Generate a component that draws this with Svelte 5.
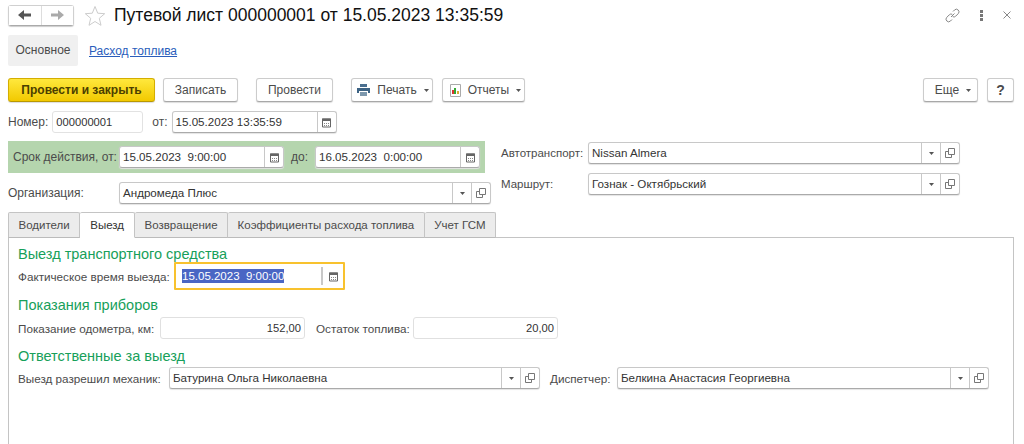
<script lang="ts">
  const tabs = ['Водители', 'Выезд', 'Возвращение', 'Коэффициенты расхода топлива', 'Учет ГСМ'];
</script>

{#snippet calendar()}
  <svg class="ico" width="11" height="11" viewBox="0 0 11 11">
    <path d="M1.500 2h8v8h-8z" fill="none" stroke="#666" />
    <path d="M1 1.500h9v2.500h-9z" fill="#666" />
    <path d="M3 6h1v1h-1zM5 6h1v1h-1zM7 6h1v1h-1zM3 8h1v1h-1zM5 8h1v1h-1zM7 8h1v1h-1z" fill="#888" />
  </svg>
{/snippet}

{#snippet caret()}
  <svg width="5" height="3" viewBox="0 0 5 3"><path d="M0 0h5l-2.500 3z" fill="#555" /></svg>
{/snippet}

{#snippet open()}
  <svg class="ico" width="10" height="10" viewBox="0 0 10 10">
    <path d="M3.500.5h6v6h-6z" fill="none" stroke="#777" />
    <path d="M3 3.500h-2.500v6h6v-2.500" fill="none" stroke="#777" />
  </svg>
{/snippet}

{#snippet dateField(cls: string, value: string)}
  <div class="field {cls}">
    <span class="value">{value}</span>
    <span class="btn">{@render calendar()}</span>
  </div>
{/snippet}

{#snippet refField(cls: string, value: string)}
  <div class="field {cls}">
    <span class="value">{value}</span>
    <span class="btn">{@render caret()}</span>
    <span class="btn">{@render open()}</span>
  </div>
{/snippet}

<div class="page">
  <header class="titlebar">
    <div class="nav">
      <button class="nav-btn">
        <svg width="14" height="10" viewBox="0 0 14 10"><path d="M6 0v3.500h7v3h-7v3.500l-6-5z" fill="#555" /></svg>
      </button>
      <button class="nav-btn">
        <svg width="14" height="10" viewBox="0 0 14 10"><path d="M8 0v3.500h-7v3h7v3.500l6-5z" fill="#aaa" /></svg>
      </button>
    </div>
    <svg class="star" width="22" height="21" viewBox="0 0 22 21">
      <path d="M11 1.500l2.700 6.700 7 .5-5.400 4.600 1.700 7-6-3.800-6 3.800 1.700-7-5.400-4.600 7-.5z" fill="none" stroke="#ccc" />
    </svg>
    <h1>Путевой лист 000000001 от 15.05.2023 13:35:59</h1>
    <div class="win-icons">
      <svg width="15" height="15" viewBox="0 0 15 15" fill="none" stroke="#888">
        <path d="M6 9l3.500-3.500M8 3.500l1.500-1.500a2.600 2.600 0 0 1 3.700 3.700l-2.500 2.500a2.600 2.600 0 0 1-3 .5" />
        <path d="M7 11.500l-1.500 1.500a2.600 2.600 0 0 1-3.700-3.700l2.500-2.500a2.600 2.600 0 0 1 3-.5" />
      </svg>
      <svg width="3" height="11" viewBox="0 0 3 11"><path d="M0 0h3v3h-3zM0 4h3v3h-3zM0 8h3v3h-3z" fill="#777" /></svg>
      <svg width="8" height="8" viewBox="0 0 8 8"><path d="M.5.500l7 7M7.500.500l-7 7" stroke="#888" fill="none" /></svg>
    </div>
  </header>

  <nav class="sections">
    <span class="section-active">Основное</span>
    <a href="#fuel" class="section-link">Расход топлива</a>
  </nav>

  <div class="toolbar">
    <button class="tbtn primary">Провести и закрыть</button>
    <button class="tbtn save">Записать</button>
    <button class="tbtn post">Провести</button>
    <button class="tbtn print">
      <svg width="13" height="12" viewBox="0 0 13 12">
        <path d="M3 0h7v3h-7z" fill="#4a6f8f" />
        <path d="M0 4h13v5h-2v-2h-9v2h-2z" fill="#3d6384" />
        <path d="M3 8h7v4h-7z" fill="#7d98ad" />
      </svg>
      Печать {@render caret()}
    </button>
    <button class="tbtn reports">
      <svg width="11" height="13" viewBox="0 0 11 13">
        <path d="M.5.500h10v12h-10z" fill="#fff" stroke="#aaa" />
        <path d="M2 6h2v4h-2z" fill="#d33" />
        <path d="M4 4h2v6h-2z" fill="#3a3" />
        <path d="M7 7h2v3h-2z" fill="#da3" />
      </svg>
      Отчеты {@render caret()}
    </button>
    <button class="tbtn more">Еще {@render caret()}</button>
    <button class="tbtn help">?</button>
  </div>

  <div class="number-row">
    <span class="lbl">Номер:</span>
    <div class="field number"><span class="value">000000001</span></div>
    <span class="lbl from">от:</span>
    {@render dateField('doc-date', '15.05.2023 13:35:59')}
  </div>

  <div class="columns">
    <div class="left-col">
      <div class="validity">
        <span class="lbl validity-lbl">Срок действия, от:</span>
        {@render dateField('valid-date', '15.05.2023  9:00:00')}
        <span class="lbl to">до:</span>
        {@render dateField('valid-date', '16.05.2023  0:00:00')}
      </div>
      <div class="org-row">
        <span class="lbl org-lbl">Организация:</span>
        {@render refField('org', 'Андромеда Плюс')}
      </div>
    </div>
    <div class="right-col">
      <div class="ref-row">
        <span class="lbl ref-lbl">Автотранспорт:</span>
        {@render refField('vehicle', 'Nissan Almera')}
      </div>
      <div class="ref-row">
        <span class="lbl ref-lbl">Маршрут:</span>
        {@render refField('vehicle', 'Гознак - Октябрьский')}
      </div>
    </div>
  </div>

  <div class="tabs">
    {#each tabs as tab, i}
      <span class="tab" class:active={i === 1}>{tab}</span>
    {/each}
  </div>

  <section class="panel">
    <h2>Выезд транспортного средства</h2>
    <div class="row first">
      <span class="lbl fact-lbl">Фактическое время выезда:</span>
      <div class="field focused">
        <span class="value"><span class="selected">15.05.2023  9:00:00</span></span>
        <span class="btn">{@render calendar()}</span>
      </div>
    </div>

    <h2 class="gauges">Показания приборов</h2>
    <div class="row">
      <span class="lbl odo-lbl">Показание одометра, км:</span>
      <div class="field num"><span class="value">152,00</span></div>
      <span class="lbl fuel-lbl">Остаток топлива:</span>
      <div class="field num"><span class="value">20,00</span></div>
    </div>

    <h2 class="resp">Ответственные за выезд</h2>
    <div class="row last">
      <span class="lbl mech-lbl">Выезд разрешил механик:</span>
      {@render refField('mech', 'Батурина Ольга Николаевна')}
      <span class="lbl disp-lbl">Диспетчер:</span>
      {@render refField('disp', 'Белкина Анастасия Георгиевна')}
    </div>
  </section>
</div>

<style>
  :global(body) {
    margin: 0;
    background: #fff;
    overflow: hidden;
  }
  .page {
    width: 1024px;
    height: 444px;
    overflow: hidden;
    box-sizing: border-box;
    padding: 4px 10px 0 8px;
    font-family: 'Liberation Sans', Arial, sans-serif;
    font-size: 12px;
    color: #4b4b4b;
  }

  .titlebar {
    display: flex;
    align-items: center;
    height: 22px;
  }
  .nav {
    display: flex;
    width: 66px;
    height: 21px;
    box-sizing: border-box;
    border: 1px solid #d0d0d0;
    border-bottom-color: #aaa;
    border-radius: 3px;
    box-shadow: 0 1px 1px #ccc;
  }
  .nav-btn {
    flex: 1;
    display: flex;
    align-items: center;
    justify-content: center;
    padding: 0;
    border: 0;
    background: #fff;
  }
  .nav-btn + .nav-btn {
    border-left: 1px solid #ddd;
  }
  .star {
    margin-left: 10px;
  }
  h1 {
    margin: 0 0 0 8px;
    font-size: 17.5px;
    font-weight: 400;
    color: #111;
  }
  .win-icons {
    margin-left: auto;
    margin-right: 3px;
    display: flex;
    align-items: center;
    gap: 20px;
  }

  .sections {
    display: flex;
    align-items: center;
    height: 31px;
    margin-top: 9px;
  }
  .section-active {
    width: 70px;
    height: 31px;
    line-height: 31px;
    text-align: center;
    background: #f0f0f0;
    border-radius: 2px;
  }
  .section-link {
    margin-left: 11px;
    color: #2a5dbb;
    text-decoration: underline;
  }

  .toolbar {
    display: flex;
    margin-top: 12px;
  }
  .tbtn {
    display: flex;
    align-items: center;
    justify-content: center;
    gap: 7px;
    height: 24px;
    padding: 0;
    box-sizing: border-box;
    border: 1px solid #ccc;
    border-bottom-color: #a8a8a8;
    border-radius: 3px;
    background: #fff;
    box-shadow: 0 1px 1px #ddd;
    font: inherit;
    color: #4b4b4b;
  }
  .primary {
    width: 147px;
    background: linear-gradient(#ffe83d, #f2c900);
    border-color: #d4ae00;
    border-bottom-color: #b99800;
    font-weight: 700;
    color: #4b3f00;
  }
  .save { width: 75px; margin-left: 8px; }
  .post { width: 77px; margin-left: 18px; }
  .print { width: 82px; margin-left: 18px; padding-left: 2px; }
  .reports { width: 83px; margin-left: 9px; padding-left: 4px; }
  .more { width: 55px; margin-left: auto; padding-left: 5px; }
  .help {
    width: 27px;
    margin-left: 9px;
    font-size: 14px;
    font-weight: 700;
  }

  .lbl {
    white-space: nowrap;
    flex: none;
  }
  .field {
    display: flex;
    flex: none;
    height: 22px;
    box-sizing: border-box;
    border: 1px solid #c8c8c8;
    border-bottom-color: #aaa;
    border-radius: 3px;
    background: #fff;
    color: #333;
    align-items: stretch;
    box-shadow: 0 1px 1px #e4e4e4;
  }
  .value {
    flex: 1;
    min-width: 0;
    padding: 0 3px;
    font-size: 11.6px;
    line-height: 20px;
    white-space: pre;
  }
  .btn {
    flex: none;
    display: flex;
    align-items: center;
    justify-content: center;
    width: 18px;
    border-left: 1px solid #c8c8c8;
  }
  .ico {
    display: block;
  }

  .number-row {
    display: flex;
    align-items: center;
    margin-top: 9px;
  }
  .number {
    width: 91px;
    margin-left: 4px;
    border-color: #e2e2e2;
    box-shadow: none;
  }
  .number .value { font-size: 11.2px; }
  .from { margin-left: 9px; }
  .doc-date {
    width: 165px;
    margin-left: 4px;
  }

  .columns {
    display: flex;
    margin-top: 8px;
  }
  .left-col {
    width: 477px;
  }
  .validity {
    display: flex;
    align-items: center;
    height: 32px;
    padding-left: 5px;
    background: #b5d5ae;
  }
  .validity-lbl { width: 106px; }
  .valid-date { width: 165px; }
  .to {
    width: 31px;
    text-align: center;
  }
  .org-row {
    display: flex;
    align-items: center;
    margin-top: 9px;
  }
  .org-lbl { width: 111px; }
  .org { width: 372px; }
  .right-col {
    margin-left: 16px;
    padding-top: 1px;
  }
  .ref-row {
    display: flex;
    align-items: center;
    margin-bottom: 9px;
  }
  .ref-lbl {
    width: 87px;
    font-size: 11.5px;
  }
  .vehicle { width: 372px; }

  .tabs {
    display: flex;
    margin-top: 8px;
    height: 26px;
    position: relative;
    z-index: 1;
  }
  .tab {
    padding: 0 9.5px;
    font-size: 11.5px;
    line-height: 25px;
    box-sizing: border-box;
    height: 26px;
    background: #ececec;
    border: 1px solid #c4c4c4;
    border-left-width: 0;
    border-bottom-color: #bbb;
    border-radius: 2px 2px 0 0;
  }
  .tab:first-child {
    border-left-width: 1px;
  }
  .tab.active {
    padding: 0 10px;
    background: #fff;
    border-bottom-color: #fff;
    color: #333;
  }

  .panel {
    margin-top: -1px;
    height: 220px;
    box-sizing: border-box;
    border: 1px solid #c4c4c4;
    padding: 8px 9px 0;
  }
  .panel .lbl {
    font-size: 11.7px;
  }
  h2 {
    margin: 0;
    font-size: 14.5px;
    line-height: 16px;
    font-weight: 400;
    color: #17a05a;
  }
  .row {
    display: flex;
    align-items: center;
    margin-top: 4px;
  }
  .row.first { margin-top: 0; }
  .row.last { margin-top: 3px; }
  .fact-lbl { width: 156px; }
  .focused {
    width: 171px;
    height: 28px;
    border: 2px solid #f8c22e;
    border-radius: 1px;
    box-shadow: none;
  }
  .focused .value {
    font-size: 11.5px;
    line-height: 24px;
    padding: 0 6px;
    color: #fff;
  }
  .selected {
    background: #4a66c4;
    padding: 1px 0;
  }
  .focused .btn {
    width: 20px;
    border-left: 2px solid #c8c8c8;
    margin: 3px 0;
  }
  .gauges { margin-top: 7px; }
  .odo-lbl { width: 142px; }
  .num {
    width: 145px;
    border-color: #e0e0e0;
    box-shadow: none;
    text-align: right;
  }
  .num .value { font-size: 11.2px; }
  .fuel-lbl {
    width: 97px;
    margin-left: 11px;
    font-size: 11.5px;
  }
  .resp { margin-top: 9px; }
  .mech-lbl { width: 151px; }
  .mech { width: 371px; }
  .disp-lbl {
    width: 67px;
    margin-left: 10px;
  }
  .disp { width: 372px; }
</style>
